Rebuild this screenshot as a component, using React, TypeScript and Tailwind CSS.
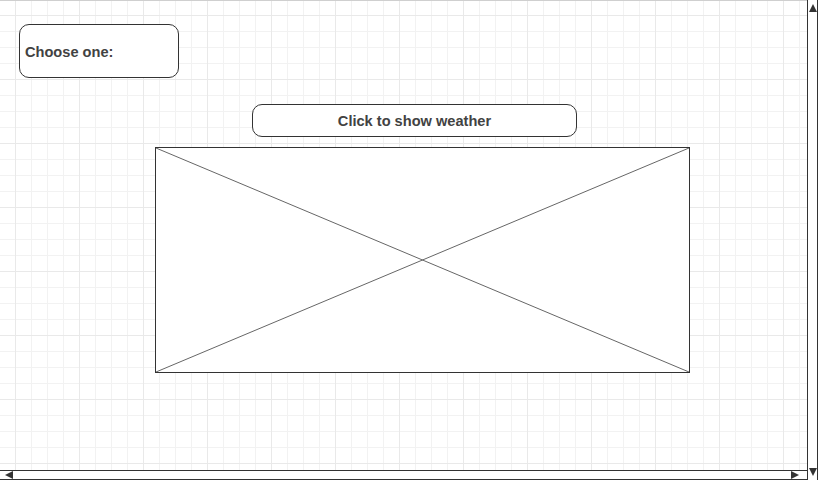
export default function App() {
  return (
    <div className="flex h-[480px] w-[818px] overflow-hidden bg-white font-['Liberation_Sans',Arial,sans-serif] text-[#424242]">
      <div className="flex h-full w-[807px] flex-col">
        {/* canvas */}
        <div className="flex flex-1 flex-col border-t border-[#cfcfcf] bg-[linear-gradient(to_right,#e9e9e9_1px,transparent_1px),linear-gradient(to_bottom,#e9e9e9_1px,transparent_1px),linear-gradient(to_right,#f2f2f2_1px,transparent_1px),linear-gradient(to_bottom,#f2f2f2_1px,transparent_1px)] bg-[size:64px_64px,64px_64px,16px_16px,16px_16px] bg-[position:15px_14px,15px_14px,15px_14px,15px_14px]">
          <div className="ml-[19px] mt-[23px] flex h-[54px] w-[160px] items-center rounded-[10px] border border-[#333] bg-white pl-[5px] pt-[4px] text-[14.6px] font-bold">
            Choose one:
          </div>
          <button className="ml-[252px] mt-[26px] flex h-[33px] w-[325px] items-center justify-center rounded-[10px] border border-[#333] bg-white pt-[3px] text-[14.6px] font-bold">
            Click to show weather
          </button>
          <div className="ml-[155px] mt-[10px] h-[226px] w-[535px] border border-[#333] bg-white">
            <svg className="h-full w-full" viewBox="0 0 533 224" preserveAspectRatio="none">
              <line x1="0" y1="0" x2="533" y2="224" stroke="#666" strokeWidth="1" />
              <line x1="533" y1="0" x2="0" y2="224" stroke="#666" strokeWidth="1" />
            </svg>
          </div>
        </div>
        {/* horizontal scrollbar */}
        <div className="flex h-[10px] items-center justify-between border-y border-[#333] bg-white px-[5px]">
          <svg width="8" height="8" viewBox="0 0 8 8">
            <polygon points="0,4 8,0 8,8" fill="#333" />
          </svg>
          <svg width="8" height="8" viewBox="0 0 8 8" className="mr-[3px]">
            <polygon points="8,4 0,0 0,8" fill="#333" />
          </svg>
        </div>
      </div>
      {/* vertical scrollbar */}
      <div className="flex h-full w-[11px] flex-col items-center justify-between border-x border-[#333] bg-white py-[4px]">
        <svg width="8" height="8" viewBox="0 0 8 8">
          <polygon points="4,0 0,8 8,8" fill="#333" />
        </svg>
        <svg width="8" height="8" viewBox="0 0 8 8">
          <polygon points="4,8 0,0 8,0" fill="#333" />
        </svg>
      </div>
    </div>
  );
}
